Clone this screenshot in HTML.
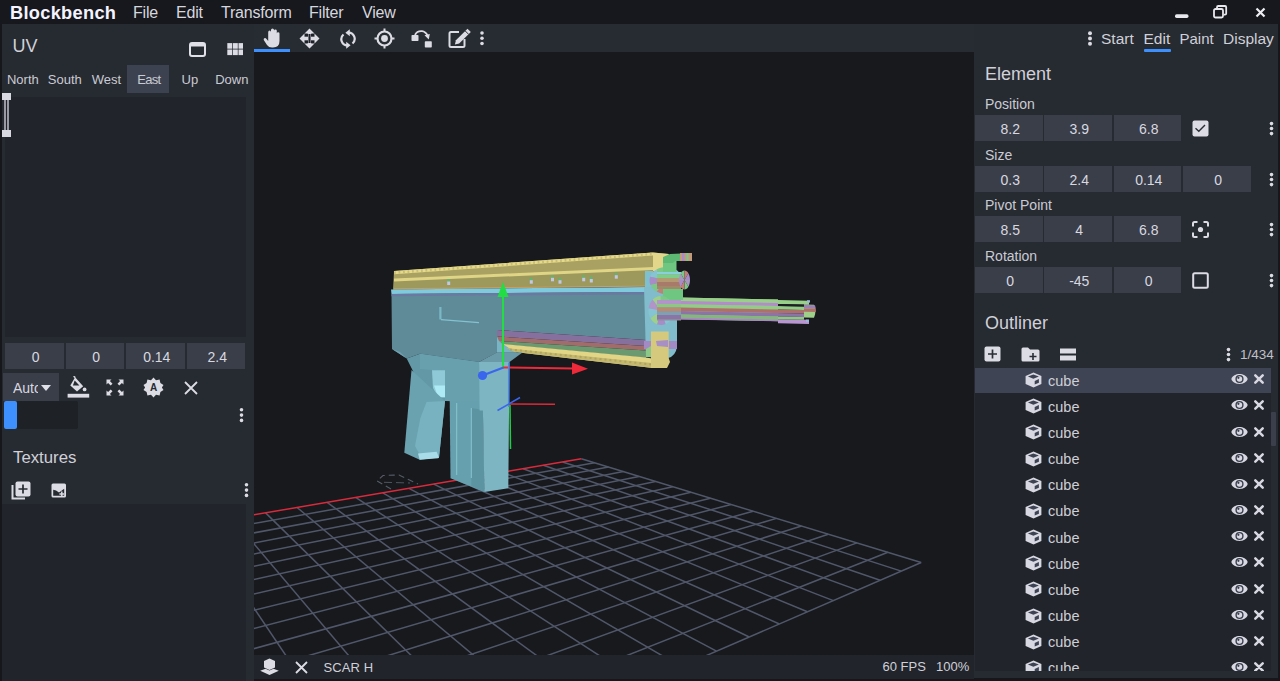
<!DOCTYPE html>
<html><head><meta charset="utf-8">
<style>
*{box-sizing:border-box;margin:0;padding:0}
html,body{width:1280px;height:681px;overflow:hidden;background:#16171b;font-family:"Liberation Sans",sans-serif;color:#cacad4}
.abs{position:absolute}
#title{position:absolute;left:0;top:0;width:1280px;height:24px;background:#16181d}
.t{position:absolute;white-space:nowrap;line-height:1}
#brand{left:9.5px;top:4.8px;font-size:17.5px;font-weight:700;color:#f4f3ff;letter-spacing:0.3px;transform:scaleX(1.04);transform-origin:0 0}
.menu{top:5px;font-size:16px;letter-spacing:-0.2px;color:#d6d6de}
#left{position:absolute;left:2px;top:24px;width:252px;height:657px;background:#262a31}
#right{position:absolute;left:974px;top:24px;width:304px;height:654px;background:#262a31}
#toolbar{position:absolute;left:254px;top:24px;width:720px;height:28px;background:#272b32}
#viewport{position:absolute;left:254px;top:52px;width:720px;height:603px;background:#17191d;overflow:hidden}
#status{position:absolute;left:254px;top:655px;width:720px;height:24px;background:#21252b}
.inp{position:absolute;background:#3a3e48;color:#d8d8e0;font-size:14px;text-align:center;line-height:29px;padding-left:3px}
.lbl{font-size:14px;color:#cacad4}
.tab{top:49px;font-size:13px;width:60px;text-align:center}
.hdr{font-size:18px;color:#d0d0d8}
#olist{position:absolute;left:975px;top:368px;width:296px;height:303px;background:#21242a;overflow:hidden}
.orow{position:absolute;left:0;width:296px;height:24.5px}
.orow.sel{background:#3e4453}
.cubeic{position:absolute;left:50px;top:4px}
.cname{position:absolute;left:73px;top:5.5px;font-size:14.5px;color:#cfcfd8;line-height:1}
.eye{position:absolute;left:256px;top:5.3px}
.xic{position:absolute;left:278.2px;top:5.3px}
</style></head><body>
<div id="title">
  <div class="t" id="brand">Blockbench</div>
  <div class="t menu" style="left:133px">File</div>
  <div class="t menu" style="left:176px">Edit</div>
  <div class="t menu" style="left:221px">Transform</div>
  <div class="t menu" style="left:309px">Filter</div>
  <div class="t menu" style="left:362px">View</div>
  <svg class="abs" style="left:1175px;top:13.5px" width="14" height="5"><rect x="0" y="0.3" width="13.5" height="3.6" rx="1.6" fill="#e8e8ee"/></svg>
  <svg class="abs" style="left:1213px;top:5px" width="15" height="14" viewBox="0 0 15 14"><rect x="1" y="4" width="9" height="8.5" rx="1.5" fill="none" stroke="#e8e8ee" stroke-width="1.8"/><path d="M4 3.5 V2.2 Q4 1 5.2 1 H12 Q13.2 1 13.2 2.2 V8.5 Q13.2 9.7 12 9.7 H10.8" fill="none" stroke="#e8e8ee" stroke-width="1.8"/></svg>
  <svg class="abs" style="left:1255px;top:7px" width="11" height="11" viewBox="0 0 11 11"><path d="M1.5 1.5 L9.5 9.5 M9.5 1.5 L1.5 9.5" stroke="#eeeef4" stroke-width="2.2"/></svg>
</div>

<div id="left">
  <div class="t hdr" style="left:10.5px;top:12.5px">UV</div>
  <svg class="abs" style="left:187px;top:18px" width="17" height="15" viewBox="0 0 17 15"><rect x="1" y="1" width="15" height="13" rx="2" fill="none" stroke="#e0e0e8" stroke-width="2"/><rect x="1" y="1" width="15" height="3.5" fill="#e0e0e8"/></svg>
  <svg class="abs" style="left:225px;top:19px" width="17" height="13" viewBox="0 0 17 13"><g fill="#dcdce4"><rect x="0.3" y="0.1" width="4.9" height="5.6"/><rect x="5.9" y="0.1" width="4.9" height="5.6"/><rect x="11.5" y="0.1" width="4.5" height="5.6"/><rect x="0.3" y="6.5" width="4.9" height="5.6"/><rect x="5.9" y="6.5" width="4.9" height="5.6"/><rect x="11.5" y="6.5" width="4.5" height="5.6"/></g></svg>
  <div class="abs" style="left:125px;top:41px;width:42px;height:28px;background:#3c4250"></div>
  <div class="t tab" style="left:-9.15px">North</div>
  <div class="t tab" style="left:32.85px">South</div>
  <div class="t tab" style="left:74.50px">West</div>
  <div class="t tab" style="left:116.9px;letter-spacing:-0.7px">East</div>
  <div class="t tab" style="left:157.90px">Up</div>
  <div class="t tab" style="left:199.75px">Down</div>
  <div class="abs" style="left:3px;top:73px;width:241px;height:240px;background:#21242a"></div>
  <div class="abs" style="left:0px;top:69px;width:9px;height:7px;background:#d8d8e0"></div>
  <div class="abs" style="left:0px;top:106px;width:9px;height:7px;background:#d8d8e0"></div>
  <div class="abs" style="left:2px;top:76px;width:2px;height:30px;background:#9a9aa2"></div>
  <div class="abs" style="left:5px;top:76px;width:2px;height:30px;background:#9a9aa2"></div>
  <div class="inp" style="left:3px;top:319px;width:58.5px;height:26px">0</div>
  <div class="inp" style="left:63.5px;top:319px;width:58.5px;height:26px">0</div>
  <div class="inp" style="left:124px;top:319px;width:58.5px;height:26px">0.14</div>
  <div class="inp" style="left:184.5px;top:319px;width:58.5px;height:26px">2.4</div>
  <div class="abs" style="left:1px;top:349px;width:56px;height:28px;background:#3a3e48;overflow:hidden"><div class="t" style="left:10px;top:8px;font-size:14px;width:25px;overflow:hidden;color:#d8d8e0">Auto</div><svg class="abs" style="left:38px;top:12px" width="11" height="7"><path d="M0 0 H10 L5 6 Z" fill="#e0e0e8"/></svg></div>
  <svg class="abs" style="left:64px;top:352px" width="24" height="22" viewBox="0 0 24 22"><path d="M9.1 1.2 L17.2 10.2 L11 15.6 L4.3 9.4 Z" fill="#dcdce4"/><path d="M8.7 4.6 L13.4 9.5 L6.9 9.5 Z" fill="#262a31"/><path d="M9.3 1.6 L7.6 0.2" stroke="#dcdce4" stroke-width="1.4"/><circle cx="18.6" cy="13.4" r="1.9" fill="#dcdce4"/><rect x="1.6" y="17.8" width="21.6" height="3.8" fill="#dcdce4"/></svg>
  <svg class="abs" style="left:104px;top:355px" width="18" height="17" viewBox="0 0 18 17"><g fill="#dcdce4"><path d="M0.5 0.5 H5.5 L3.9 2.1 L6.5 4.7 L4.7 6.5 L2.1 3.9 L0.5 5.5 Z"/><path d="M17.5 0.5 H12.5 L14.1 2.1 L11.5 4.7 L13.3 6.5 L15.9 3.9 L17.5 5.5 Z"/><path d="M0.5 16.5 H5.5 L3.9 14.9 L6.5 12.3 L4.7 10.5 L2.1 13.1 L0.5 11.5 Z"/><path d="M17.5 16.5 H12.5 L14.1 14.9 L11.5 12.3 L13.3 10.5 L15.9 13.1 L17.5 11.5 Z"/></g></svg>
  <svg class="abs" style="left:141px;top:353px" width="21" height="21" viewBox="0 0 21 21"><path fill="#dcdce4" d="M10.5 0.5 L13 3.2 L16.6 2.4 L17.4 6 L20.5 8 L18.9 10.5 L20.5 13 L17.4 15 L16.6 18.6 L13 17.8 L10.5 20.5 L8 17.8 L4.4 18.6 L3.6 15 L0.5 13 L2.1 10.5 L0.5 8 L3.6 6 L4.4 2.4 L8 3.2 Z"/><text x="10.5" y="14.3" font-family="Liberation Sans" font-weight="700" font-size="10" text-anchor="middle" fill="#262a31">A</text></svg>
  <svg class="abs" style="left:182px;top:357px" width="14" height="14" viewBox="0 0 14 14"><path d="M1 1 L13 13 M13 1 L1 13" stroke="#dcdce4" stroke-width="1.8"/></svg>
  <div class="abs" style="left:2px;top:377px;width:74px;height:28px;background:#1e2126;border-radius:2px"></div>
  <div class="abs" style="left:2px;top:377px;width:13px;height:28px;background:#3e90ff;border-radius:2px"></div>
  <svg class="abs" style="left:237px;top:383px" width="5" height="16" viewBox="0 0 5 16"><circle cx="2.5" cy="2.8" r="1.8" fill="#dcdce4"/><circle cx="2.5" cy="8.1" r="1.8" fill="#dcdce4"/><circle cx="2.5" cy="13.4" r="1.8" fill="#dcdce4"/></svg>
  <div class="t hdr" style="left:11px;top:426px;font-size:16.8px">Textures</div>
  <svg class="abs" style="left:9px;top:457px" width="20" height="19" viewBox="0 0 20 19"><path d="M1.5 4 V17.5 H14" fill="none" stroke="#dcdce4" stroke-width="2"/><rect x="4.5" y="0.5" width="15" height="15" rx="2" fill="#dcdce4"/><path d="M12 3.5 V12.5 M7.5 8 H16.5" stroke="#262a31" stroke-width="1.7"/></svg>
  <svg class="abs" style="left:48.5px;top:459px" width="16" height="15" viewBox="0 0 16 15"><rect x="0.5" y="0.5" width="14.5" height="14" rx="1.5" fill="#dcdce4"/><path d="M2.2 6.8 Q5 6.8 8 9.5 L13.2 5.8 V12.8 H2.2 Z" fill="#262a31"/><path d="M10.8 8.6 V13.4 M8.4 11 H13.2" stroke="#dcdce4" stroke-width="1.5"/></svg>
  <svg class="abs" style="left:242px;top:458px" width="5" height="16" viewBox="0 0 5 16"><circle cx="2.5" cy="2.8" r="1.8" fill="#dcdce4"/><circle cx="2.5" cy="8.1" r="1.8" fill="#dcdce4"/><circle cx="2.5" cy="13.4" r="1.8" fill="#dcdce4"/></svg>
  <div class="abs" style="left:0px;top:480px;width:244px;height:177px;background:#21242a"></div>
</div>

<div id="toolbar">
  <div class="abs" style="left:0px;top:25px;width:36px;height:3px;background:#3e90ff"></div>
  <svg class="abs" style="left:9px;top:4px" width="19" height="20" viewBox="0 0 19 20"><path fill="#dcdce4" d="M5.2 4.2 Q5.2 2.6 6.6 2.6 Q8 2.6 8 4.2 V9 V2 Q8 0.5 9.5 0.5 Q11 0.5 11 2 V9 V2.8 Q11 1.4 12.4 1.4 Q13.8 1.4 13.8 2.8 V9.5 V5.5 Q13.8 4.2 15.1 4.2 Q16.5 4.2 16.5 5.5 V13 Q16.5 19.5 10 19.5 H9 Q5.8 19.5 4 17 L0.9 12.2 Q0.2 11 1.3 10.3 Q2.4 9.6 3.3 10.8 L5.2 13 Z"/></svg>
  <svg class="abs" style="left:45px;top:4px" width="21" height="21" viewBox="0 0 21 21"><path fill="#dcdce4" d="M10.5 0.5 L15.5 5.5 L12.3 5.5 L12.3 8.7 L15.5 8.7 L15.5 5.5 L20.5 10.5 L15.5 15.5 L15.5 12.3 L12.3 12.3 L12.3 15.5 L15.5 15.5 L10.5 20.5 L5.5 15.5 L8.7 15.5 L8.7 12.3 L5.5 12.3 L5.5 15.5 L0.5 10.5 L5.5 5.5 L5.5 8.7 L8.7 8.7 L8.7 5.5 L5.5 5.5 Z"/><rect x="6" y="6" width="9" height="9" fill="#1e2128"/><rect x="6" y="8.7" width="3" height="3.6" fill="#dcdce4"/><rect x="12" y="8.7" width="3" height="3.6" fill="#dcdce4"/><rect x="9" y="6" width="0.8" height="9" fill="#8a8a94"/><rect x="11.2" y="6" width="0.8" height="9" fill="#8a8a94"/></svg>
  <svg class="abs" style="left:85px;top:5px" width="18" height="20" viewBox="0 0 18 20"><g transform="translate(18,0) scale(-1,1)"><g fill="none" stroke="#dcdce4" stroke-width="2.2"><path d="M4.5 14.5 A6.2 6.2 0 0 1 8.5 3.6"/><path d="M13.5 5.5 A6.2 6.2 0 0 1 9.5 16.4"/></g><path fill="#dcdce4" d="M7.2 0.2 L11.6 3.8 L7.2 7.2 Z M10.8 12.8 L6.4 16.2 L10.8 19.8 Z"/></g></svg>
  <svg class="abs" style="left:120px;top:4px" width="21" height="21" viewBox="0 0 21 21"><circle cx="10.5" cy="10.5" r="7" fill="none" stroke="#dcdce4" stroke-width="2.2"/><circle cx="10.5" cy="10.5" r="3.4" fill="#dcdce4"/><path d="M10.5 0.5 V3.5 M10.5 17.5 V20.5 M0.5 10.5 H3.5 M17.5 10.5 H20.5" stroke="#dcdce4" stroke-width="2"/></svg>
  <svg class="abs" style="left:157px;top:6px" width="22" height="18" viewBox="0 0 22 18"><rect x="0.5" y="5" width="7" height="6" rx="0.8" fill="#dcdce4"/><rect x="13.8" y="11.3" width="7" height="6.3" rx="0.8" fill="#dcdce4"/><path d="M4 5 Q6 0.8 11 1.2 Q14.5 1.6 16.5 5.5" fill="none" stroke="#dcdce4" stroke-width="1.8"/><path d="M13.5 5.2 L18.8 4 L17.8 9.6 Z" fill="#dcdce4"/></svg>
  <svg class="abs" style="left:194px;top:4px" width="24" height="21" viewBox="0 0 24 21"><path d="M11 4 H3 Q1.5 4 1.5 5.5 V17.5 Q1.5 19 3 19 H15 Q16.5 19 16.5 17.5 V11" fill="none" stroke="#dcdce4" stroke-width="2"/><path d="M19.5 0.8 L22.8 4.1 L11.2 15.6 L6.9 16.6 L7.9 12.3 Z" fill="#dcdce4"/><path d="M17.3 3 L20.6 6.3" stroke="#282c34" stroke-width="1"/></svg>
  <svg class="abs" style="left:224.5px;top:6px" width="6" height="17" viewBox="0 0 6 17"><circle cx="3" cy="3" r="1.8" fill="#dcdce4"/><circle cx="3" cy="8.2" r="1.8" fill="#dcdce4"/><circle cx="3" cy="13.5" r="1.8" fill="#dcdce4"/></svg>
</div>

<div id="viewport">
<svg width="720" height="603" viewBox="0 0 720 603" style="position:absolute;left:0;top:0">
<g stroke="#51576a" stroke-width="1.5" fill="none">
<line x1="340.6" y1="410.8" x2="-88.9" y2="487.3"/>
<line x1="354.6" y1="415.1" x2="-84.3" y2="496.5"/>
<line x1="369.4" y1="419.6" x2="-79.4" y2="506.4"/>
<line x1="384.9" y1="424.4" x2="-74.0" y2="517.0"/>
<line x1="401.4" y1="429.4" x2="-68.2" y2="528.6"/>
<line x1="418.7" y1="434.7" x2="-61.9" y2="541.2"/>
<line x1="437.0" y1="440.3" x2="-55.1" y2="554.9"/>
<line x1="456.5" y1="446.2" x2="-47.5" y2="570.0"/>
<line x1="477.1" y1="452.5" x2="-39.2" y2="586.6"/>
<line x1="499.1" y1="459.2" x2="-30.0" y2="604.9"/>
<line x1="522.5" y1="466.4" x2="-19.8" y2="625.4"/>
<line x1="547.5" y1="474.0" x2="-8.4" y2="648.2"/>
<line x1="574.2" y1="482.2" x2="4.5" y2="674.0"/>
<line x1="603.0" y1="490.9" x2="19.2" y2="703.3"/>
<line x1="633.9" y1="500.3" x2="35.9" y2="736.8"/>
<line x1="667.2" y1="510.5" x2="55.3" y2="775.6"/>
<line x1="308.6" y1="410.0" x2="647.3" y2="519.1"/>
<line x1="289.3" y1="413.3" x2="626.2" y2="528.3"/>
<line x1="269.1" y1="416.7" x2="603.6" y2="538.1"/>
<line x1="248.2" y1="420.3" x2="579.4" y2="548.6"/>
<line x1="226.3" y1="424.1" x2="553.4" y2="559.8"/>
<line x1="203.5" y1="428.0" x2="525.4" y2="572.0"/>
<line x1="179.7" y1="432.1" x2="495.2" y2="585.0"/>
<line x1="154.9" y1="436.3" x2="462.5" y2="599.2"/>
<line x1="128.8" y1="440.8" x2="426.9" y2="614.6"/>
<line x1="101.6" y1="445.4" x2="388.2" y2="631.4"/>
<line x1="73.1" y1="450.3" x2="345.8" y2="649.7"/>
<line x1="43.1" y1="455.5" x2="299.2" y2="669.9"/>
<line x1="11.6" y1="460.9" x2="247.8" y2="692.2"/>
<line x1="-21.5" y1="466.5" x2="190.7" y2="716.9"/>
<line x1="-56.4" y1="472.5" x2="126.9" y2="744.5"/>
<line x1="-93.2" y1="478.8" x2="55.3" y2="775.6"/>
<line x1="327.3" y1="406.8" x2="667.2" y2="510.5"/>
</g>
<line x1="327.3" y1="406.8" x2="-93.2" y2="478.8" stroke="#dc2a3c" stroke-width="1.5"/>
<g transform="translate(-254,-52)">
<!-- dashed ground ellipse -->
<path d="M391 489 L377 481 L383 475.5 L399 475 L418 484" fill="none" stroke="#585c68" stroke-width="1.1" stroke-dasharray="6 4"/><path d="M384 482.3 L410 483" fill="none" stroke="#505460" stroke-width="1" stroke-dasharray="8 4"/>
<!-- barrel -->
<path d="M680 297.60 L778 299.46 L778 321.16 L680 319.30 Z" fill="#8ec884"/>
<path d="M680 297.60 L778 299.46 L778 302.96 L680 301.10 Z" fill="#98d08a"/>
<path d="M680 301.10 L778 302.96 L778 306.06 L680 304.20 Z" fill="#b48ccc"/>
<path d="M680 304.20 L804 306.56 L804 309.96 L680 307.60 Z" fill="#92cc86"/>
<path d="M680 307.60 L804 309.96 L804 313.46 L680 311.10 Z" fill="#b0706a"/>
<path d="M680 311.10 L804 313.46 L804 316.96 L680 314.60 Z" fill="#8c74a8"/>
<path d="M680 314.60 L778 316.46 L778 319.46 L680 317.60 Z" fill="#82b87a"/>
<path d="M680 317.60 L778 319.46 L778 321.36 L680 319.50 Z" fill="#a888c0"/>
<path d="M778 300.06 L809 300.65 L809 304.65 L778 304.06 Z" fill="#98d08a"/>
<path d="M778 319.26 L809 319.85 L809 323.95 L778 323.36 Z" fill="#b896d0"/>
<path d="M778 304.06 L804 304.56 L804 306.56 L778 306.06 Z" fill="#1c1e24"/>
<path d="M778 316.46 L804 316.96 L804 319.76 L778 319.26 Z" fill="#8ec884"/>
<path d="M804 304.5 L814 304.8 Q817 311 814 317.8 L804 317.5 Z" fill="#9ed08a"/>
<path d="M804 305 L815 305.3 L815.8 308.6 L804 308.4 Z" fill="#9a80b4"/>
<path d="M804 308.4 L815.8 308.6 L815.8 312 L804 311.8 Z" fill="#b0706a"/>
<rect x="807" y="300.2" width="3" height="2.4" fill="#9ab8d8"/><rect x="806" y="319.6" width="3" height="2.4" fill="#9ab8d8"/>
<!-- upper rail yellow -->
<path d="M394.0 271.1 L653.0 252.4 L668.7 254.0 L669.0 290.0 L653.0 286.6 L393.0 289.7 Z" fill="#9d985c"/>
<path d="M394.0 274.1 L653.0 255.4 L653.0 267.0 L394.0 278.4 Z" fill="#a8a162"/>
<path d="M394.0 271.1 L653.0 252.4 L653.0 255.6 L394.0 274.3 Z" fill="#e6da8a"/>
<path d="M394.0 272.7 L653.0 254.0 Z" fill="none" stroke="#cabe76" stroke-width="2.6" stroke-dasharray="1.5 3"/>
<path d="M394.0 278.4 L653.0 267.0 L653.0 270.0 L394.0 281.4 Z" fill="#e0d486"/>
<path d="M394.0 288.2 L653.0 285.6 L653.0 286.6 L394.0 289.2 Z" fill="#c8a066"/>
<path d="M653 252.4 L668.7 254 L669 271 L653 271 Z" fill="#e2d68a"/>
<path d="M645 271 L653 271 L653 287 L645 287 Z" fill="#7ec0d0"/>
<g><rect x="447.2" y="279.0" width="2.5" height="2.5" fill="#5cb86a"/><rect x="447.2" y="281.5" width="3" height="3.5" fill="#c4c6e6"/><rect x="529.8" y="277.8" width="2.5" height="2.5" fill="#5cb86a"/><rect x="529.8" y="280.2" width="3" height="3.5" fill="#c4c6e6"/><rect x="551.0" y="275.2" width="2.5" height="2.5" fill="#5cb86a"/><rect x="551.0" y="277.8" width="3" height="3.5" fill="#c4c6e6"/><rect x="558.5" y="277.8" width="2.5" height="2.5" fill="#5cb86a"/><rect x="558.5" y="280.2" width="3" height="3.5" fill="#c4c6e6"/><rect x="582.2" y="275.2" width="2.5" height="2.5" fill="#5cb86a"/><rect x="582.2" y="277.8" width="3" height="3.5" fill="#c4c6e6"/><rect x="589.8" y="276.5" width="2.5" height="2.5" fill="#5cb86a"/><rect x="589.8" y="279.0" width="3" height="3.5" fill="#c4c6e6"/><rect x="614.8" y="272.8" width="2.5" height="2.5" fill="#5cb86a"/><rect x="614.8" y="275.2" width="3" height="3.5" fill="#c4c6e6"/></g>
<!-- receiver side -->
<path d="M391.5 294 L646 292 L646 340 L497 330 L497 352.6 L479 362 L420 353.8 L406.7 358.5 L392 349 Z" fill="#5f8b98"/>
<path d="M392 349 L406.7 358.5 L400 352 Z" fill="#6ea2b0"/>
<path d="M391 289.5 L646 287 L646 292 L391.5 294 Z" fill="#80cade"/>
<path d="M391.5 294 L646 292 L646 294.4 L391.5 296.2 Z" fill="#6a78a2"/>
<rect x="439.3" y="307" width="2.2" height="12.5" fill="#7ab8c6"/><path d="M441 319.6 L479 322.6" fill="none" stroke="#84c2d0" stroke-width="1.1"/>
<!-- stripes -->
<path d="M497 336 L505 344 L517 352.8 L497 352.8 Z" fill="#78b4c4"/>
<path d="M497 352.6 L505 352.6 L505 354 L497 354 Z" fill="#5f8b98"/>
<path d="M497 330 L646 340 L646 346 L497 336.5 Z" fill="#86709e"/>
<path d="M497 336.5 L646 346 L646 350.5 L499 341 Z" fill="#a06c6c"/>
<path d="M499 341 L646 350.5 L646 358 L503 344.5 Z" fill="#6c9a70"/>
<!-- lower rail -->
<path d="M503 344 L646 357.5 L652 358.5 L653 368 L515 352 Z" fill="#e2d686"/>
<path d="M506 348 L652 363 L653 368 L515 352 Z" fill="#c4b870"/>
<path d="M510 349.5 L652 364.5" fill="none" stroke="#b0a460" stroke-width="2" stroke-dasharray="2 3"/>
<!-- receiver front face -->
<path d="M644 287 L677 287 L677 346 Q676 356 668 358 L646 357 Z" fill="#80bccc"/>
<path d="M644 341 L677 341 L677 349 L644 349 Z" fill="#a48ac4"/>
<path d="M646 349 L651 346 L651 357 L646 357 Z" fill="#8cc888"/>
<path d="M651 331.5 L668.7 331.5 L668.7 358 L670 362 L667 368 L651 368 Z" fill="#d4c97c"/>
<path d="M656 341 L668 340 L668 347 L657 346 Z" fill="#a890c4"/>
<!-- upper ring + cylinder -->
<path d="M666.0 280.5 L681.8 284.5 L680.8 286.5 L679.5 288.3 L677.8 289.9 L675.9 291.3 Z" fill="#86c4d4"/>
<path d="M666.0 280.5 L675.9 291.3 L673.7 292.4 L671.3 293.3 L668.8 293.8 L666.2 294.0 Z" fill="#a88cc8"/>
<path d="M666.0 280.5 L666.2 294.0 L663.6 293.9 L661.1 293.4 L658.7 292.6 L656.5 291.5 Z" fill="#c08078"/>
<path d="M666.0 280.5 L656.5 291.5 L654.5 290.2 L652.8 288.6 L651.4 286.8 L650.4 284.9 Z" fill="#7cc888"/>
<path d="M666.0 280.5 L650.4 284.9 L649.7 282.8 L649.5 280.7 L649.7 278.6 L650.2 276.5 Z" fill="#a88cc8"/>
<path d="M666.0 280.5 L650.2 276.5 L651.2 274.5 L652.5 272.7 L654.2 271.1 L656.1 269.7 Z" fill="#86c4d4"/>
<path d="M666.0 280.5 L656.1 269.7 L658.3 268.6 L660.7 267.7 L663.2 267.2 L665.8 267.0 Z" fill="#7cc888"/>
<path d="M666.0 280.5 L665.8 267.0 L668.4 267.1 L670.9 267.6 L673.3 268.4 L675.5 269.5 Z" fill="#b8a0d0"/>
<path d="M666.0 280.5 L675.5 269.5 L677.5 270.8 L679.2 272.4 L680.6 274.2 L681.6 276.1 Z" fill="#86c4d4"/>
<path d="M666.0 280.5 L681.6 276.1 L682.3 278.2 L682.5 280.3 L682.3 282.4 L681.8 284.5 Z" fill="#a88cc8"/>
<path d="M657 272 L681 272 L681 289 L657 289 Z" fill="#a08a6a"/>
<path d="M657 272 L681 272 L681 274.5 L657 274.5 Z" fill="#8ad0dc"/>
<path d="M657 274.5 L681 274.5 L681 278 L657 278 Z" fill="#7ccf88"/>
<path d="M657 278 L681 278 L681 282 L657 282 Z" fill="#b49a72"/>
<path d="M657 282 L681 282 L681 286 L657 286 Z" fill="#a87a6a"/>
<path d="M684.5 280.0 L690.0 280.0 L689.9 281.9 L689.6 283.6 L689.1 285.3 L688.4 286.7 Z" fill="#a898c0"/>
<path d="M684.5 280.0 L688.4 286.7 L687.6 287.9 L686.6 288.8 L685.6 289.3 L684.5 289.5 Z" fill="#7cc888"/>
<path d="M684.5 280.0 L684.5 289.5 L683.4 289.3 L682.4 288.8 L681.4 287.9 L680.6 286.7 Z" fill="#c08078"/>
<path d="M684.5 280.0 L680.6 286.7 L679.9 285.3 L679.4 283.6 L679.1 281.9 L679.0 280.0 Z" fill="#a88cc8"/>
<path d="M684.5 280.0 L679.0 280.0 L679.1 278.1 L679.4 276.4 L679.9 274.7 L680.6 273.3 Z" fill="#a898c0"/>
<path d="M684.5 280.0 L680.6 273.3 L681.4 272.1 L682.4 271.2 L683.4 270.7 L684.5 270.5 Z" fill="#7cc888"/>
<path d="M684.5 280.0 L684.5 270.5 L685.6 270.7 L686.6 271.2 L687.6 272.1 L688.4 273.3 Z" fill="#c08078"/>
<path d="M684.5 280.0 L688.4 273.3 L689.1 274.7 L689.6 276.4 L689.9 278.1 L690.0 280.0 Z" fill="#a88cc8"/>
<!-- green sight post -->
<path d="M663 261 L676.5 261 L676.5 272 L663 272 Z" fill="#6fc681"/>
<path d="M663 289 L683 289 L683 300 L663 300 Z" fill="#6fc681"/>
<path d="M663 257 L670 254 L692 253 L692 261 L675 261 L673 263 L663 263 Z" fill="#5cb872"/>
<path d="M680 253 L692 253 L692 261 L680 261 Z" fill="#c49a7a"/>
<path d="M682 253 L684.5 253 L684.5 261 L682 261 Z" fill="#a88cc8"/>
<path d="M686.5 253 L688.5 253 L688.5 261 L686.5 261 Z" fill="#7cc888"/>
<!-- lower ring -->
<path d="M661.0 310.5 L672.0 317.5 L670.8 319.6 L669.3 321.4 L667.5 322.9 L665.6 324.0 Z" fill="#86c4d4"/>
<path d="M661.0 310.5 L665.6 324.0 L663.5 324.7 L661.3 325.0 L659.1 324.8 L657.0 324.2 Z" fill="#a88cc8"/>
<path d="M661.0 310.5 L657.0 324.2 L655.0 323.2 L653.2 321.8 L651.6 320.1 L650.3 318.0 Z" fill="#9ed08a"/>
<path d="M661.0 310.5 L650.3 318.0 L649.4 315.8 L648.7 313.4 L648.5 310.8 L648.6 308.3 Z" fill="#86c4d4"/>
<path d="M661.0 310.5 L648.6 308.3 L649.2 305.9 L650.0 303.5 L651.2 301.4 L652.7 299.6 Z" fill="#b194c8"/>
<path d="M661.0 310.5 L652.7 299.6 L654.5 298.1 L656.4 297.0 L658.5 296.3 L660.7 296.0 Z" fill="#9ed08a"/>
<path d="M661.0 310.5 L660.7 296.0 L662.9 296.2 L665.0 296.8 L667.0 297.8 L668.8 299.2 Z" fill="#7cc888"/>
<path d="M661.0 310.5 L668.8 299.2 L670.4 300.9 L671.7 303.0 L672.6 305.2 L673.3 307.6 Z" fill="#86c4d4"/>
<path d="M661.0 310.5 L673.3 307.6 L673.5 310.2 L673.4 312.7 L672.8 315.1 L672.0 317.5 Z" fill="#a88cc8"/>
<path d="M657 300 L681 300 L681 320.5 L657 320.5 Z" fill="#8e8c9a"/>
<path d="M657 300 L681 300 L681 304 L657 304 Z" fill="#b194c8"/>
<path d="M657 304 L681 304 L681 307.5 L657 307.5 Z" fill="#8cc884"/>
<path d="M657 307.5 L681 307.5 L681 311.5 L657 311.5 Z" fill="#b98c72"/>
<path d="M657 311.5 L681 311.5 L681 315 L657 315 Z" fill="#7ea0b0"/>
<path d="M657 315 L681 315 L681 319 L657 319 Z" fill="#8a74a8"/>
<!-- lower receiver / magwell face -->
<path d="M406.7 358.5 L420 353.8 L479 362 L482 401 L445 401 L426.6 402 L412.6 370.2 Z" fill="#6399a7"/>
<path d="M420 353.8 L479 362 L480 402 L445 401 L445 371 L432 370 L420 369 Z" fill="#68a0ae"/>
<path d="M432 370.2 L445 370.2 L445 397.3 L438 397.3 L433 388 Z" fill="#8fc8d6"/>
<path d="M434 385.5 L445 385.5 L445 397.3 L438 397.3 Z" fill="#aeeaf6"/>
<path d="M479 362 L496.6 352.6 L522.5 352.6 L509.5 362 Z" fill="#6a9aa8"/>
<!-- pistol grip -->
<path d="M411.5 370 L445 401 L439 457.5 L419.7 459.8 L404.3 452.8 Z" fill="#6aa2b0"/>
<path d="M426.6 402 L445 401 L439 457.5 L419.7 454.4 L415 446 L420.4 418 Z" fill="#78b2c0"/>
<path d="M418 453.6 L436.6 451.7 L439 457.5 L438.2 458.2 L419.7 459.8 Z" fill="#a8dce8"/>
<!-- magazine -->
<path d="M449.7 401 L482.9 401 L484.4 492 L450.5 478.3 Z" fill="#66a0ae"/>
<path d="M471.3 408 L482.9 410 L484.4 492 L471.3 486 Z" fill="#5c94a2"/>
<path d="M456.7 403 V475 M471.3 408 V478" stroke="#88c4d0" stroke-width="1"/>
<path d="M479 362 L509.5 362 L508.3 488.3 L484.4 492.1 L482.9 410.4 L479.6 410.4 Z" fill="#7db5c3"/>
<!-- gizmo -->
<path d="M503 367.5 V295" stroke="#22dd44" stroke-width="2"/>
<path d="M497.5 297 L508.5 297 L503 282 Z" fill="#22dd44"/>
<path d="M503 367.5 L574 368.5" stroke="#ee2a3a" stroke-width="2"/>
<path d="M572 362.5 L572 374.5 L588 368.7 Z" fill="#ee2a3a"/>
<path d="M482.5 375.5 L503.5 367.5" stroke="#3a66ee" stroke-width="2"/>
<circle cx="482.5" cy="375.5" r="4.6" fill="#3a66ee"/>
<path d="M508.7 362.5 V407" stroke="#4a8af0" stroke-width="1.5"/>
<path d="M510 405 L510.5 449" stroke="#22cc44" stroke-width="1.5"/>
<path d="M509 404 L555 404.3" stroke="#dd2a3a" stroke-width="1.5"/>
<path d="M497.5 410.5 L520 397.5" stroke="#3a66ee" stroke-width="1.5"/>
</g>
</svg>
</div>

<div id="status">
  <svg class="abs" style="left:6px;top:3px" width="19" height="18" viewBox="0 0 19 18"><path d="M9.5 0.5 L15 3 V9.5 L9.5 12 L4 9.5 V3 Z" fill="#dcdce4"/><path d="M0.2 12.8 L5.5 10.8 L9.5 12.6 L13.5 10.8 L18.8 12.8 L9.5 17 Z" fill="#dcdce4"/></svg>
  <svg class="abs" style="left:41px;top:6px" width="13" height="13" viewBox="0 0 13 13"><path d="M1 1 L12 12 M12 1 L1 12" stroke="#dcdce4" stroke-width="1.8"/></svg>
  <div class="t" style="left:69.5px;top:5.5px;font-size:13px;letter-spacing:0.1px;color:#d0d0d8">SCAR H</div>
  <div class="t" style="left:628.5px;top:5px;font-size:13px;color:#d0d0d8">60 FPS</div>
  <div class="t" style="left:682px;top:5px;font-size:13px;color:#d0d0d8">100%</div>
</div>

<div id="right">
  <div class="t" style="left:127px;top:7px;font-size:15.5px;color:#d0d0d8">Start</div>
  <div class="t" style="left:169.5px;top:7px;font-size:15.5px;color:#d0d0d8">Edit</div>
  <div class="abs" style="left:170px;top:25.3px;width:27px;height:3px;background:#3e90ff;border-radius:1px"></div>
  <div class="t" style="left:205.5px;top:7px;font-size:15px;color:#d0d0d8">Paint</div>
  <div class="t" style="left:249px;top:7px;font-size:15.5px;color:#d0d0d8">Display</div>
  <div class="t hdr" style="left:11px;top:41px">Element</div>
  <svg class="abs" style="left:113px;top:6.8px" width="6" height="15" viewBox="0 0 6 15"><circle cx="3" cy="2.2" r="2" fill="#dcdce4"/><circle cx="3" cy="7.5" r="2" fill="#dcdce4"/><circle cx="3" cy="12.8" r="2" fill="#dcdce4"/></svg>
  <div class="t lbl" style="left:11px;top:73px">Position</div>
  <div class="inp" style="left:1px;top:91px;width:67.5px;height:26px">8.2</div>
  <div class="inp" style="left:70px;top:91px;width:67.5px;height:26px">3.9</div>
  <div class="inp" style="left:139.5px;top:91px;width:67.5px;height:26px">6.8</div>
  <svg class="abs" style="left:218px;top:96px" width="17" height="17" viewBox="0 0 17 17"><rect x="0.5" y="0.5" width="16" height="16" rx="2" fill="#dcdce4"/><path d="M3.5 8.3 L6.8 11.3 L13 5" fill="none" stroke="#2a2d35" stroke-width="1.4"/></svg>
  <svg class="abs" style="left:295px;top:97px" width="5" height="15" viewBox="0 0 5 15"><circle cx="2.5" cy="2.6" r="1.8" fill="#dcdce4"/><circle cx="2.5" cy="7.5" r="1.8" fill="#dcdce4"/><circle cx="2.5" cy="12.6" r="1.8" fill="#dcdce4"/></svg>
  <div class="t lbl" style="left:11px;top:124px">Size</div>
  <div class="inp" style="left:1px;top:141.5px;width:67.5px;height:26px">0.3</div>
  <div class="inp" style="left:70px;top:141.5px;width:67.5px;height:26px">2.4</div>
  <div class="inp" style="left:139.5px;top:141.5px;width:67.5px;height:26px">0.14</div>
  <div class="inp" style="left:209px;top:141.5px;width:67.5px;height:26px">0</div>
  <svg class="abs" style="left:295px;top:148px" width="5" height="15" viewBox="0 0 5 15"><circle cx="2.5" cy="2.6" r="1.8" fill="#dcdce4"/><circle cx="2.5" cy="7.5" r="1.8" fill="#dcdce4"/><circle cx="2.5" cy="12.6" r="1.8" fill="#dcdce4"/></svg>
  <div class="t lbl" style="left:11px;top:174px">Pivot Point</div>
  <div class="inp" style="left:1px;top:192px;width:67.5px;height:26px">8.5</div>
  <div class="inp" style="left:70px;top:192px;width:67.5px;height:26px">4</div>
  <div class="inp" style="left:139.5px;top:192px;width:67.5px;height:26px">6.8</div>
  <svg class="abs" style="left:218px;top:197px" width="17" height="17" viewBox="0 0 17 17"><path d="M1 5.5 V2.5 Q1 1 2.5 1 H5.5 M11.5 1 H14.5 Q16 1 16 2.5 V5.5 M16 11.5 V14.5 Q16 16 14.5 16 H11.5 M5.5 16 H2.5 Q1 16 1 14.5 V11.5" fill="none" stroke="#dcdce4" stroke-width="2"/><circle cx="8.5" cy="8.5" r="2.6" fill="#dcdce4"/></svg>
  <svg class="abs" style="left:295px;top:198px" width="5" height="15" viewBox="0 0 5 15"><circle cx="2.5" cy="2.6" r="1.8" fill="#dcdce4"/><circle cx="2.5" cy="7.5" r="1.8" fill="#dcdce4"/><circle cx="2.5" cy="12.6" r="1.8" fill="#dcdce4"/></svg>
  <div class="t lbl" style="left:11px;top:225px">Rotation</div>
  <div class="inp" style="left:1px;top:243px;width:67.5px;height:26px">0</div>
  <div class="inp" style="left:70px;top:243px;width:67.5px;height:26px">-45</div>
  <div class="inp" style="left:139.5px;top:243px;width:67.5px;height:26px">0</div>
  <svg class="abs" style="left:218px;top:248px" width="17" height="17" viewBox="0 0 17 17"><rect x="1.2" y="1.2" width="14.6" height="14.6" rx="1.5" fill="none" stroke="#dcdce4" stroke-width="2"/></svg>
  <svg class="abs" style="left:295px;top:249px" width="5" height="15" viewBox="0 0 5 15"><circle cx="2.5" cy="2.6" r="1.8" fill="#dcdce4"/><circle cx="2.5" cy="7.5" r="1.8" fill="#dcdce4"/><circle cx="2.5" cy="12.6" r="1.8" fill="#dcdce4"/></svg>
  <div class="t hdr" style="left:11px;top:290px">Outliner</div>
  <svg class="abs" style="left:10px;top:322px" width="17" height="16" viewBox="0 0 17 16"><rect x="0.5" y="0.5" width="16" height="15" rx="2" fill="#dcdce4"/><path d="M8.5 3.5 V12.5 M4 8 H13" stroke="#2a2d35" stroke-width="1.7"/></svg>
  <svg class="abs" style="left:47px;top:323px" width="19" height="15" viewBox="0 0 19 15"><path d="M0.5 2 Q0.5 0.5 2 0.5 H7 L9 2.5 H17 Q18.5 2.5 18.5 4 V13 Q18.5 14.5 17 14.5 H2 Q0.5 14.5 0.5 13 Z" fill="#dcdce4"/><path d="M12 6 V13 M8.5 9.5 H15.5" stroke="#2a2d35" stroke-width="1.6"/></svg>
  <svg class="abs" style="left:86px;top:324px" width="16" height="13" viewBox="0 0 16 13"><rect x="0" y="0.5" width="16" height="5" fill="#dcdce4"/><rect x="0" y="7.5" width="16" height="5" fill="#dcdce4"/></svg>
  <svg class="abs" style="left:252px;top:323px" width="5" height="15" viewBox="0 0 5 15"><circle cx="2.5" cy="2.6" r="1.8" fill="#dcdce4"/><circle cx="2.5" cy="7.5" r="1.8" fill="#dcdce4"/><circle cx="2.5" cy="12.6" r="1.8" fill="#dcdce4"/></svg>
  <div class="t" style="left:266px;top:324px;font-size:13.5px;color:#c0c0c8">1/434</div>
  <div class="abs" style="left:297px;top:388px;width:5px;height:34px;background:#3a3f4b;border-radius:1px"></div>
</div>

<div id="olist">
<div class="orow sel" style="top:0.00px"><svg class="cubeic" width="17" height="16" viewBox="0 0 17 16"><path d="M8.5 0.4 L16.4 3.9 L16.4 12.1 L8.5 15.6 L0.6 12.1 L0.6 3.9 Z" fill="#d8d8e2"/><path d="M2.9 4.6 L8.4 2.5 L13.9 4.6 L8.4 6.7 Z" fill="#3c4252"/><path d="M9.7 8.9 L13.9 7.1 L13.9 10.7 L9.7 12.5 Z" fill="#3c4252"/></svg><span class="cname">cube</span><svg class="eye" width="17" height="12" viewBox="0 0 17 12"><path d="M0.3 6 C2.6 -0.6 14.4 -0.6 16.7 6 C14.4 12.6 2.6 12.6 0.3 6 Z" fill="#d8d8e2"/><circle cx="8.5" cy="6" r="3.4" fill="none" stroke="#3a3f4d" stroke-width="1.4"/><circle cx="7.4" cy="4.8" r="1.1" fill="#3a3f4d"/></svg><svg class="xic" width="12" height="12" viewBox="0 0 12 12"><path d="M2.3 2.3 L9.7 9.7 M9.7 2.3 L2.3 9.7" stroke="#d8d8e2" stroke-width="2.5" stroke-linecap="round"/></svg></div>
<div class="orow" style="top:26.17px"><svg class="cubeic" width="17" height="16" viewBox="0 0 17 16"><path d="M8.5 0.4 L16.4 3.9 L16.4 12.1 L8.5 15.6 L0.6 12.1 L0.6 3.9 Z" fill="#d8d8e2"/><path d="M2.9 4.6 L8.4 2.5 L13.9 4.6 L8.4 6.7 Z" fill="#3c4252"/><path d="M9.7 8.9 L13.9 7.1 L13.9 10.7 L9.7 12.5 Z" fill="#3c4252"/></svg><span class="cname">cube</span><svg class="eye" width="17" height="12" viewBox="0 0 17 12"><path d="M0.3 6 C2.6 -0.6 14.4 -0.6 16.7 6 C14.4 12.6 2.6 12.6 0.3 6 Z" fill="#d8d8e2"/><circle cx="8.5" cy="6" r="3.4" fill="none" stroke="#3a3f4d" stroke-width="1.4"/><circle cx="7.4" cy="4.8" r="1.1" fill="#3a3f4d"/></svg><svg class="xic" width="12" height="12" viewBox="0 0 12 12"><path d="M2.3 2.3 L9.7 9.7 M9.7 2.3 L2.3 9.7" stroke="#d8d8e2" stroke-width="2.5" stroke-linecap="round"/></svg></div>
<div class="orow" style="top:52.34px"><svg class="cubeic" width="17" height="16" viewBox="0 0 17 16"><path d="M8.5 0.4 L16.4 3.9 L16.4 12.1 L8.5 15.6 L0.6 12.1 L0.6 3.9 Z" fill="#d8d8e2"/><path d="M2.9 4.6 L8.4 2.5 L13.9 4.6 L8.4 6.7 Z" fill="#3c4252"/><path d="M9.7 8.9 L13.9 7.1 L13.9 10.7 L9.7 12.5 Z" fill="#3c4252"/></svg><span class="cname">cube</span><svg class="eye" width="17" height="12" viewBox="0 0 17 12"><path d="M0.3 6 C2.6 -0.6 14.4 -0.6 16.7 6 C14.4 12.6 2.6 12.6 0.3 6 Z" fill="#d8d8e2"/><circle cx="8.5" cy="6" r="3.4" fill="none" stroke="#3a3f4d" stroke-width="1.4"/><circle cx="7.4" cy="4.8" r="1.1" fill="#3a3f4d"/></svg><svg class="xic" width="12" height="12" viewBox="0 0 12 12"><path d="M2.3 2.3 L9.7 9.7 M9.7 2.3 L2.3 9.7" stroke="#d8d8e2" stroke-width="2.5" stroke-linecap="round"/></svg></div>
<div class="orow" style="top:78.51px"><svg class="cubeic" width="17" height="16" viewBox="0 0 17 16"><path d="M8.5 0.4 L16.4 3.9 L16.4 12.1 L8.5 15.6 L0.6 12.1 L0.6 3.9 Z" fill="#d8d8e2"/><path d="M2.9 4.6 L8.4 2.5 L13.9 4.6 L8.4 6.7 Z" fill="#3c4252"/><path d="M9.7 8.9 L13.9 7.1 L13.9 10.7 L9.7 12.5 Z" fill="#3c4252"/></svg><span class="cname">cube</span><svg class="eye" width="17" height="12" viewBox="0 0 17 12"><path d="M0.3 6 C2.6 -0.6 14.4 -0.6 16.7 6 C14.4 12.6 2.6 12.6 0.3 6 Z" fill="#d8d8e2"/><circle cx="8.5" cy="6" r="3.4" fill="none" stroke="#3a3f4d" stroke-width="1.4"/><circle cx="7.4" cy="4.8" r="1.1" fill="#3a3f4d"/></svg><svg class="xic" width="12" height="12" viewBox="0 0 12 12"><path d="M2.3 2.3 L9.7 9.7 M9.7 2.3 L2.3 9.7" stroke="#d8d8e2" stroke-width="2.5" stroke-linecap="round"/></svg></div>
<div class="orow" style="top:104.68px"><svg class="cubeic" width="17" height="16" viewBox="0 0 17 16"><path d="M8.5 0.4 L16.4 3.9 L16.4 12.1 L8.5 15.6 L0.6 12.1 L0.6 3.9 Z" fill="#d8d8e2"/><path d="M2.9 4.6 L8.4 2.5 L13.9 4.6 L8.4 6.7 Z" fill="#3c4252"/><path d="M9.7 8.9 L13.9 7.1 L13.9 10.7 L9.7 12.5 Z" fill="#3c4252"/></svg><span class="cname">cube</span><svg class="eye" width="17" height="12" viewBox="0 0 17 12"><path d="M0.3 6 C2.6 -0.6 14.4 -0.6 16.7 6 C14.4 12.6 2.6 12.6 0.3 6 Z" fill="#d8d8e2"/><circle cx="8.5" cy="6" r="3.4" fill="none" stroke="#3a3f4d" stroke-width="1.4"/><circle cx="7.4" cy="4.8" r="1.1" fill="#3a3f4d"/></svg><svg class="xic" width="12" height="12" viewBox="0 0 12 12"><path d="M2.3 2.3 L9.7 9.7 M9.7 2.3 L2.3 9.7" stroke="#d8d8e2" stroke-width="2.5" stroke-linecap="round"/></svg></div>
<div class="orow" style="top:130.85px"><svg class="cubeic" width="17" height="16" viewBox="0 0 17 16"><path d="M8.5 0.4 L16.4 3.9 L16.4 12.1 L8.5 15.6 L0.6 12.1 L0.6 3.9 Z" fill="#d8d8e2"/><path d="M2.9 4.6 L8.4 2.5 L13.9 4.6 L8.4 6.7 Z" fill="#3c4252"/><path d="M9.7 8.9 L13.9 7.1 L13.9 10.7 L9.7 12.5 Z" fill="#3c4252"/></svg><span class="cname">cube</span><svg class="eye" width="17" height="12" viewBox="0 0 17 12"><path d="M0.3 6 C2.6 -0.6 14.4 -0.6 16.7 6 C14.4 12.6 2.6 12.6 0.3 6 Z" fill="#d8d8e2"/><circle cx="8.5" cy="6" r="3.4" fill="none" stroke="#3a3f4d" stroke-width="1.4"/><circle cx="7.4" cy="4.8" r="1.1" fill="#3a3f4d"/></svg><svg class="xic" width="12" height="12" viewBox="0 0 12 12"><path d="M2.3 2.3 L9.7 9.7 M9.7 2.3 L2.3 9.7" stroke="#d8d8e2" stroke-width="2.5" stroke-linecap="round"/></svg></div>
<div class="orow" style="top:157.02px"><svg class="cubeic" width="17" height="16" viewBox="0 0 17 16"><path d="M8.5 0.4 L16.4 3.9 L16.4 12.1 L8.5 15.6 L0.6 12.1 L0.6 3.9 Z" fill="#d8d8e2"/><path d="M2.9 4.6 L8.4 2.5 L13.9 4.6 L8.4 6.7 Z" fill="#3c4252"/><path d="M9.7 8.9 L13.9 7.1 L13.9 10.7 L9.7 12.5 Z" fill="#3c4252"/></svg><span class="cname">cube</span><svg class="eye" width="17" height="12" viewBox="0 0 17 12"><path d="M0.3 6 C2.6 -0.6 14.4 -0.6 16.7 6 C14.4 12.6 2.6 12.6 0.3 6 Z" fill="#d8d8e2"/><circle cx="8.5" cy="6" r="3.4" fill="none" stroke="#3a3f4d" stroke-width="1.4"/><circle cx="7.4" cy="4.8" r="1.1" fill="#3a3f4d"/></svg><svg class="xic" width="12" height="12" viewBox="0 0 12 12"><path d="M2.3 2.3 L9.7 9.7 M9.7 2.3 L2.3 9.7" stroke="#d8d8e2" stroke-width="2.5" stroke-linecap="round"/></svg></div>
<div class="orow" style="top:183.19px"><svg class="cubeic" width="17" height="16" viewBox="0 0 17 16"><path d="M8.5 0.4 L16.4 3.9 L16.4 12.1 L8.5 15.6 L0.6 12.1 L0.6 3.9 Z" fill="#d8d8e2"/><path d="M2.9 4.6 L8.4 2.5 L13.9 4.6 L8.4 6.7 Z" fill="#3c4252"/><path d="M9.7 8.9 L13.9 7.1 L13.9 10.7 L9.7 12.5 Z" fill="#3c4252"/></svg><span class="cname">cube</span><svg class="eye" width="17" height="12" viewBox="0 0 17 12"><path d="M0.3 6 C2.6 -0.6 14.4 -0.6 16.7 6 C14.4 12.6 2.6 12.6 0.3 6 Z" fill="#d8d8e2"/><circle cx="8.5" cy="6" r="3.4" fill="none" stroke="#3a3f4d" stroke-width="1.4"/><circle cx="7.4" cy="4.8" r="1.1" fill="#3a3f4d"/></svg><svg class="xic" width="12" height="12" viewBox="0 0 12 12"><path d="M2.3 2.3 L9.7 9.7 M9.7 2.3 L2.3 9.7" stroke="#d8d8e2" stroke-width="2.5" stroke-linecap="round"/></svg></div>
<div class="orow" style="top:209.36px"><svg class="cubeic" width="17" height="16" viewBox="0 0 17 16"><path d="M8.5 0.4 L16.4 3.9 L16.4 12.1 L8.5 15.6 L0.6 12.1 L0.6 3.9 Z" fill="#d8d8e2"/><path d="M2.9 4.6 L8.4 2.5 L13.9 4.6 L8.4 6.7 Z" fill="#3c4252"/><path d="M9.7 8.9 L13.9 7.1 L13.9 10.7 L9.7 12.5 Z" fill="#3c4252"/></svg><span class="cname">cube</span><svg class="eye" width="17" height="12" viewBox="0 0 17 12"><path d="M0.3 6 C2.6 -0.6 14.4 -0.6 16.7 6 C14.4 12.6 2.6 12.6 0.3 6 Z" fill="#d8d8e2"/><circle cx="8.5" cy="6" r="3.4" fill="none" stroke="#3a3f4d" stroke-width="1.4"/><circle cx="7.4" cy="4.8" r="1.1" fill="#3a3f4d"/></svg><svg class="xic" width="12" height="12" viewBox="0 0 12 12"><path d="M2.3 2.3 L9.7 9.7 M9.7 2.3 L2.3 9.7" stroke="#d8d8e2" stroke-width="2.5" stroke-linecap="round"/></svg></div>
<div class="orow" style="top:235.53px"><svg class="cubeic" width="17" height="16" viewBox="0 0 17 16"><path d="M8.5 0.4 L16.4 3.9 L16.4 12.1 L8.5 15.6 L0.6 12.1 L0.6 3.9 Z" fill="#d8d8e2"/><path d="M2.9 4.6 L8.4 2.5 L13.9 4.6 L8.4 6.7 Z" fill="#3c4252"/><path d="M9.7 8.9 L13.9 7.1 L13.9 10.7 L9.7 12.5 Z" fill="#3c4252"/></svg><span class="cname">cube</span><svg class="eye" width="17" height="12" viewBox="0 0 17 12"><path d="M0.3 6 C2.6 -0.6 14.4 -0.6 16.7 6 C14.4 12.6 2.6 12.6 0.3 6 Z" fill="#d8d8e2"/><circle cx="8.5" cy="6" r="3.4" fill="none" stroke="#3a3f4d" stroke-width="1.4"/><circle cx="7.4" cy="4.8" r="1.1" fill="#3a3f4d"/></svg><svg class="xic" width="12" height="12" viewBox="0 0 12 12"><path d="M2.3 2.3 L9.7 9.7 M9.7 2.3 L2.3 9.7" stroke="#d8d8e2" stroke-width="2.5" stroke-linecap="round"/></svg></div>
<div class="orow" style="top:261.70px"><svg class="cubeic" width="17" height="16" viewBox="0 0 17 16"><path d="M8.5 0.4 L16.4 3.9 L16.4 12.1 L8.5 15.6 L0.6 12.1 L0.6 3.9 Z" fill="#d8d8e2"/><path d="M2.9 4.6 L8.4 2.5 L13.9 4.6 L8.4 6.7 Z" fill="#3c4252"/><path d="M9.7 8.9 L13.9 7.1 L13.9 10.7 L9.7 12.5 Z" fill="#3c4252"/></svg><span class="cname">cube</span><svg class="eye" width="17" height="12" viewBox="0 0 17 12"><path d="M0.3 6 C2.6 -0.6 14.4 -0.6 16.7 6 C14.4 12.6 2.6 12.6 0.3 6 Z" fill="#d8d8e2"/><circle cx="8.5" cy="6" r="3.4" fill="none" stroke="#3a3f4d" stroke-width="1.4"/><circle cx="7.4" cy="4.8" r="1.1" fill="#3a3f4d"/></svg><svg class="xic" width="12" height="12" viewBox="0 0 12 12"><path d="M2.3 2.3 L9.7 9.7 M9.7 2.3 L2.3 9.7" stroke="#d8d8e2" stroke-width="2.5" stroke-linecap="round"/></svg></div>
<div class="orow" style="top:287.87px"><svg class="cubeic" width="17" height="16" viewBox="0 0 17 16"><path d="M8.5 0.4 L16.4 3.9 L16.4 12.1 L8.5 15.6 L0.6 12.1 L0.6 3.9 Z" fill="#d8d8e2"/><path d="M2.9 4.6 L8.4 2.5 L13.9 4.6 L8.4 6.7 Z" fill="#3c4252"/><path d="M9.7 8.9 L13.9 7.1 L13.9 10.7 L9.7 12.5 Z" fill="#3c4252"/></svg><span class="cname">cube</span><svg class="eye" width="17" height="12" viewBox="0 0 17 12"><path d="M0.3 6 C2.6 -0.6 14.4 -0.6 16.7 6 C14.4 12.6 2.6 12.6 0.3 6 Z" fill="#d8d8e2"/><circle cx="8.5" cy="6" r="3.4" fill="none" stroke="#3a3f4d" stroke-width="1.4"/><circle cx="7.4" cy="4.8" r="1.1" fill="#3a3f4d"/></svg><svg class="xic" width="12" height="12" viewBox="0 0 12 12"><path d="M2.3 2.3 L9.7 9.7 M9.7 2.3 L2.3 9.7" stroke="#d8d8e2" stroke-width="2.5" stroke-linecap="round"/></svg></div>
</div>
</body></html>
